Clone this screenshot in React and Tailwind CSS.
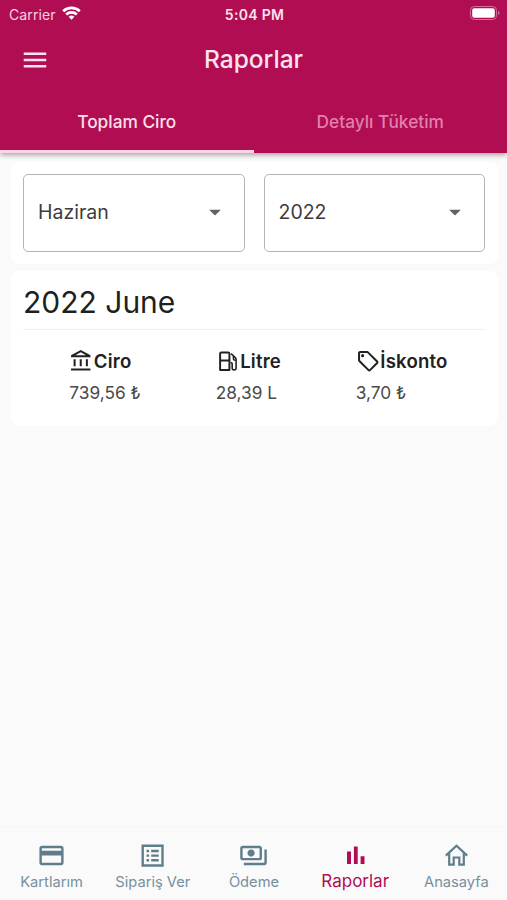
import React, { useState } from 'react';
import {
  MdMenu,
  MdArrowDropDown,
  MdOutlineAccountBalance,
  MdOutlineLocalOffer,
  MdOutlineCreditCard,
  MdOutlinePayments,
} from 'react-icons/md';

const abas = ['Toplam Ciro', 'Detaylı Tüketim'];

function IconeBomba({ className }) {
  return (
    <svg viewBox="0 0 25 25" className={className} fill="none" stroke="currentColor" strokeLinejoin="round">
      <path strokeWidth="2" d="M4.2 21.5V4.8a1.3 1.3 0 0 1 1.3-1.3h6.900a1.300 1.300 0 0 1 1.300 1.300v16.700zM4.200 11.800h9.500" />
      <path
        strokeWidth="1.6"
        d="M15.300 4.700l4.400 4c.6.5.8 1.200.8 2v8.600a2 2 0 0 1-4 0v-4.200c0-.9-.7-1.400-1.700-1.400M17.800 7.500v2.300c0 1 .8 1.700 1.800 1.700"
      />
    </svg>
  );
}

function IconeLista({ className }) {
  return (
    <svg viewBox="0 0 29 29" className={className} fill="none" stroke="currentColor" strokeWidth="2.4">
      <path d="M4.700 4.700h19.800v19.800H4.700z" />
      <path d="M8.500 10h2.600M8.500 14.600h2.600M8.500 19.200h2.600M13.200 10h7.500M13.200 14.600h7.500M13.200 19.200h7.500" />
    </svg>
  );
}

function IconeBarras({ className }) {
  return (
    <svg viewBox="0 0 29 29" className={className} fill="currentColor">
      <path d="M6 10.500h4V23H6zM12.900 5.500h3.800V23h-3.800zM19.600 15.200h3.900V23h-3.900z" />
    </svg>
  );
}

function IconeCasa({ className }) {
  return (
    <svg viewBox="0 0 29 29" className={className} fill="none" stroke="currentColor" strokeWidth="2.200">
      <path d="M3.800 14.600 14.500 4.800l10.700 9.800" />
      <path d="M7.200 12.200v11.500h4.500v-7.200h5.600v7.200h4.500V12.200" />
    </svg>
  );
}

const valores = [
  { nome: 'Ciro', valor: '739,56 ₺', Icone: MdOutlineAccountBalance },
  { nome: 'Litre', valor: '28,39 L', Icone: IconeBomba },
  { nome: 'İskonto', valor: '3,70 ₺', Icone: MdOutlineLocalOffer },
];

const menu = [
  { nome: 'Kartlarım', Icone: MdOutlineCreditCard },
  { nome: 'Sipariş Ver', Icone: IconeLista },
  { nome: 'Ödeme', Icone: MdOutlinePayments },
  { nome: 'Raporlar', Icone: IconeBarras },
  { nome: 'Anasayfa', Icone: IconeCasa },
];

function StatusBar() {
  return (
    <div className="grid h-7 grid-cols-3 items-center pr-[7px] pl-[9px] text-[#f5d3e2]">
      <div className="flex items-center gap-1.5">
        <span className="text-[14px] tracking-[0.1px]">Carrier</span>
        <svg className="-mt-0.5 text-white" width="19" height="14" viewBox="0 0 19 14" fill="none" stroke="currentColor" strokeWidth="2.7">
          <path d="M1.2 5.200a12 12 0 0 1 16.600 0" />
          <path d="M4.200 8.400a7.700 7.700 0 0 1 10.600 0" />
          <path d="M9.500 13.700 6.600 10.800a4.200 4.200 0 0 1 5.800 0z" fill="currentColor" stroke="none" />
        </svg>
      </div>
      <span className="text-center text-[14px] font-semibold tracking-[0.3px] text-[#fbe3ee]">5:04 PM</span>
      <svg className="-mt-0.5 justify-self-end" width="30" height="14" viewBox="0 0 30 14">
        <rect x="0.5" y="0.5" width="26" height="13" rx="3.8" fill="none" stroke="#d0709a" />
        <rect x="2.200" y="2.200" width="22.600" height="9.600" rx="2" fill="#fff" />
        <path d="M28 5c2 .8 2 3.200 0 4z" fill="#d0709a" />
      </svg>
    </div>
  );
}

function Selecao({ valor }) {
  return (
    <button className="flex h-[78px] flex-1 items-center justify-between rounded-[5px] border-[1.5px] border-[#b4b4b4] pr-[15px] pl-[14px] text-[19.5px] text-[#3c3c3c]">
      <span className="pb-px">{valor}</span>
      <MdArrowDropDown className="mb-0.5 size-[28px] text-[#616161]" />
    </button>
  );
}

function App() {
  const [aba, setAba] = useState(0);
  const [ativo, setAtivo] = useState('Raporlar');

  return (
    <div className="flex h-screen flex-col bg-[#fafafa] font-['Inter','Noto_Sans',sans-serif]">
      <header className="relative h-[153px] shrink-0 bg-[#b00d52] shadow-[0_2px_5px_rgba(0,0,0,0.35)]">
        <StatusBar />
        <div className="grid h-[63px] grid-cols-[60px_1fr_60px] items-center text-[#fbe3ee]">
          <MdMenu className="ml-5 size-[30px]" />
          <h1 className="text-center text-[24.5px] font-medium">Raporlar</h1>
        </div>
        {/* Abas */}
        <div className="grid h-[62px] grid-cols-2">
          {abas.map((nome, i) => (
            <button
              key={nome}
              onClick={() => setAba(i)}
              className={`border-b-[3px] pt-[3px] text-[17.3px] font-medium ${
                aba === i ? 'border-[#fbd3e4] text-[#fde0ec]' : 'border-transparent text-[#e27fab]'
              }`}
            >
              {nome}
            </button>
          ))}
        </div>
      </header>

      <main className="flex flex-1 flex-col gap-[7px] pt-[9px] pr-[9px] pl-[11px]">
        <section className="flex h-[102px] gap-[19px] rounded-lg bg-white pt-[12px] pr-[13px] pl-[12px]">
          <Selecao valor="Haziran" />
          <Selecao valor="2022" />
        </section>

        <section className="h-[155px] rounded-lg bg-white px-[13px]">
          <h2 className="-ml-px flex h-[59px] items-center border-b border-[#efefef] pt-1 text-[30px] text-[#1f1f1f]">
            2022 June
          </h2>
          <div className="flex justify-around pt-[18px] pl-2">
            {valores.map(({ nome, valor, Icone }) => (
              <div key={nome}>
                <div className="flex h-[26px] items-center text-[18.6px] font-semibold tracking-[0.2px] text-[#212121]">
                  <Icone className="size-[24.5px]" />
                  <span className="pt-px">{nome}</span>
                </div>
                <p className="mt-1.5 text-[17.3px] text-[#4a4a4a]">{valor}</p>
              </div>
            ))}
          </div>
        </section>
      </main>

      {/* Menu inferior */}
      <nav className="grid h-[74px] shrink-0 grid-cols-5 border-t border-[#f6f6f6] bg-[#fafafa] pl-px">
        {menu.map(({ nome, Icone }) => (
          <button
            key={nome}
            onClick={() => setAtivo(nome)}
            className={`flex flex-col items-center pt-3.5 whitespace-nowrap ${
              ativo === nome ? 'text-[17px] text-[#b00d52]' : 'text-[14.7px] text-[#607d8b]'
            }`}
          >
            <Icone className="size-[29px]" />
            <span className={ativo === nome ? 'leading-[22px]' : 'leading-6 text-[#78909c]'}>{nome}</span>
          </button>
        ))}
      </nav>
    </div>
  );
}

export default App;
